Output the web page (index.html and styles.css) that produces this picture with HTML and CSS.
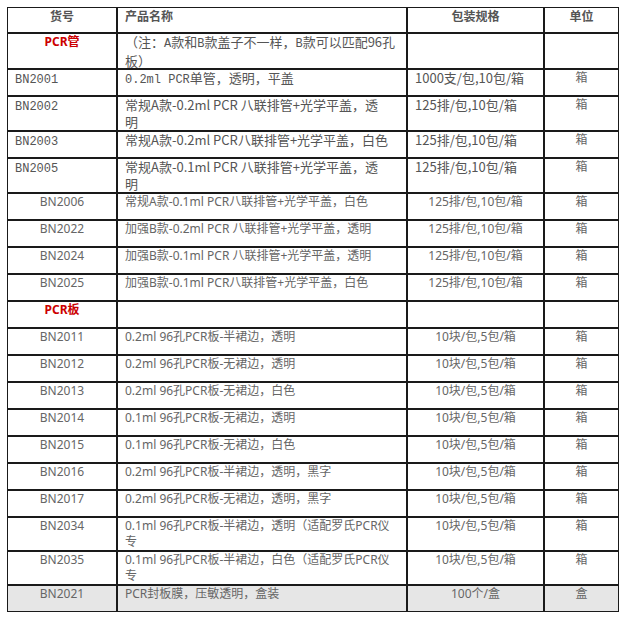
FILE: index.html
```html
<!DOCTYPE html>
<html lang="zh-CN">
<head>
<meta charset="utf-8">
<title>PCR耗材</title>
<link rel="stylesheet" href="styles.css">
</head>
<body>
<table class="tbl">
  <colgroup>
    <col class="c1"><col class="c2"><col class="c3"><col class="c4">
  </colgroup>
  <tr class="head">
    <td class="ctr">货号</td>
    <td>产品名称</td>
    <td class="ctr">包装规格</td>
    <td class="ctr">单位</td>
  </tr>
  <tr class="dbl tight">
    <td class="ctr sec">PCR管</td>
    <td class="song"><span class="ln">（注：<span class="m">A</span>款和<span class="m">B</span>款盖子不一样，<span class="m">B</span>款可以匹配96孔</span><span class="ln">板）</span></td>
    <td></td>
    <td></td>
  </tr>
  <tr class="sgl">
    <td class="song"><span class="m">BN2001</span></td>
    <td class="song"><span class="m">0.2ml PCR</span>单管，透明，平盖</td>
    <td class="song">1000支/包,10包/箱</td>
    <td class="ctr sans">箱</td>
  </tr>
  <tr class="dbl">
    <td class="song"><span class="m">BN2002</span></td>
    <td class="song"><span class="ln">常规A款-0.2ml PCR 八联排管+光学平盖，透</span><span class="ln">明</span></td>
    <td class="song">125排/包,10包/箱</td>
    <td class="ctr sans">箱</td>
  </tr>
  <tr class="sgl">
    <td class="song"><span class="m">BN2003</span></td>
    <td class="song">常规A款-0.2ml PCR八联排管+光学平盖，白色</td>
    <td class="song">125排/包,10包/箱</td>
    <td class="ctr sans">箱</td>
  </tr>
  <tr class="dbl">
    <td class="song"><span class="m">BN2005</span></td>
    <td class="song"><span class="ln">常规A款-0.1ml PCR 八联排管+光学平盖，透</span><span class="ln">明</span></td>
    <td class="song">125排/包,10包/箱</td>
    <td class="ctr sans">箱</td>
  </tr>
  <tr class="sgl sans">
    <td class="ctr">BN2006</td>
    <td>常规A款-0.1ml PCR八联排管+光学平盖，白色</td>
    <td class="ctr">125排/包,10包/箱</td>
    <td class="ctr">箱</td>
  </tr>
  <tr class="sgl sans">
    <td class="ctr">BN2022</td>
    <td>加强B款-0.2ml PCR 八联排管+光学平盖，透明</td>
    <td class="ctr">125排/包,10包/箱</td>
    <td class="ctr">箱</td>
  </tr>
  <tr class="sgl sans">
    <td class="ctr">BN2024</td>
    <td>加强B款-0.1ml PCR 八联排管+光学平盖，透明</td>
    <td class="ctr">125排/包,10包/箱</td>
    <td class="ctr">箱</td>
  </tr>
  <tr class="sgl sans">
    <td class="ctr">BN2025</td>
    <td>加强B款-0.1ml PCR八联排管+光学平盖，白色</td>
    <td class="ctr">125排/包,10包/箱</td>
    <td class="ctr">箱</td>
  </tr>
  <tr class="sgl">
    <td class="ctr sec">PCR板</td>
    <td></td>
    <td></td>
    <td></td>
  </tr>
  <tr class="sgl sans">
    <td class="ctr">BN2011</td>
    <td>0.2ml 96孔PCR板-半裙边，透明</td>
    <td class="ctr">10块/包,5包/箱</td>
    <td class="ctr">箱</td>
  </tr>
  <tr class="sgl sans">
    <td class="ctr">BN2012</td>
    <td>0.2ml 96孔PCR板-无裙边，透明</td>
    <td class="ctr">10块/包,5包/箱</td>
    <td class="ctr">箱</td>
  </tr>
  <tr class="sgl sans">
    <td class="ctr">BN2013</td>
    <td>0.2ml 96孔PCR板-无裙边，白色</td>
    <td class="ctr">10块/包,5包/箱</td>
    <td class="ctr">箱</td>
  </tr>
  <tr class="sgl sans">
    <td class="ctr">BN2014</td>
    <td>0.1ml 96孔PCR板-无裙边，透明</td>
    <td class="ctr">10块/包,5包/箱</td>
    <td class="ctr">箱</td>
  </tr>
  <tr class="sgl sans">
    <td class="ctr">BN2015</td>
    <td>0.1ml 96孔PCR板-无裙边，白色</td>
    <td class="ctr">10块/包,5包/箱</td>
    <td class="ctr">箱</td>
  </tr>
  <tr class="sgl sans">
    <td class="ctr">BN2016</td>
    <td>0.2ml 96孔PCR板-半裙边，透明，黑字</td>
    <td class="ctr">10块/包,5包/箱</td>
    <td class="ctr">箱</td>
  </tr>
  <tr class="sgl sans">
    <td class="ctr">BN2017</td>
    <td>0.2ml 96孔PCR板-无裙边，透明，黑字</td>
    <td class="ctr">10块/包,5包/箱</td>
    <td class="ctr">箱</td>
  </tr>
  <tr class="dbl2 sans">
    <td class="ctr">BN2034</td>
    <td><span class="ln">0.1ml 96孔PCR板-半裙边，透明（适配罗氏PCR仪</span><span class="ln">专</span></td>
    <td class="ctr">10块/包,5包/箱</td>
    <td class="ctr">箱</td>
  </tr>
  <tr class="dbl2 sans">
    <td class="ctr">BN2035</td>
    <td><span class="ln">0.1ml 96孔PCR板-半裙边，白色（适配罗氏PCR仪</span><span class="ln">专</span></td>
    <td class="ctr">10块/包,5包/箱</td>
    <td class="ctr">箱</td>
  </tr>
  <tr class="sgl sans grey">
    <td class="ctr">BN2021</td>
    <td>PCR封板膜，压敏透明，盒装</td>
    <td class="ctr">100个/盒</td>
    <td class="ctr">盒</td>
  </tr>
</table>
</body>
</html>
```

FILE: styles.css
```css
html, body {
  margin: 0;
  padding: 0;
  background: #ffffff;
}

body {
  padding: 7px;
}

.tbl {
  table-layout: fixed;
  width: 612px;
  border-collapse: separate;
  border-spacing: 0;
  font-family: "Noto Sans", "Noto Sans CJK SC", sans-serif;
  color: #666666;
}

.c1 { width: 110px; }
.c2 { width: 290px; }
.c3 { width: 137px; }
.c4 { width: 75px; }

.tbl td {
  border: 1px solid #1a1a1a;
  padding: 0 7px;
  vertical-align: top;
  text-align: left;
  font-size: 12px;
  line-height: 16px;
  overflow: hidden;
  white-space: nowrap;
}

.ln {
  display: block;
}

.tbl .ctr {
  text-align: center;
}

.head td {
  height: 24px;
  font-weight: bold;
  color: #555555;
  font-family: "Noto Sans CJK SC", sans-serif;
  font-size: 12px;
}

.sgl td {
  height: 25px;
}

.dbl td {
  height: 33px;
}

.dbl td.song {
  line-height: 16.5px;
}

.dbl.tight td.song {
  line-height: 15.5px;
}

.dbl.tight td {
  height: 31px;
}

.dbl2 td {
  height: 32px;
}

.tbl td.song {
  font-family: "Noto Sans CJK SC", sans-serif;
  font-size: 13px;
  color: #555555;
}

.m {
  font-family: "Liberation Mono", monospace;
  font-size: 12px;
}

.tbl td.sans,
.sans td {
  font-family: "Noto Sans", "Noto Sans CJK SC", sans-serif;
  font-size: 12px;
  color: #666666;
}

.tbl td.sec {
  color: #cc0000;
  font-weight: bold;
  font-family: "Noto Sans", "Noto Sans CJK SC", sans-serif;
  font-size: 12px;
}

.grey td {
  background: #e6e6e6;
}
```
